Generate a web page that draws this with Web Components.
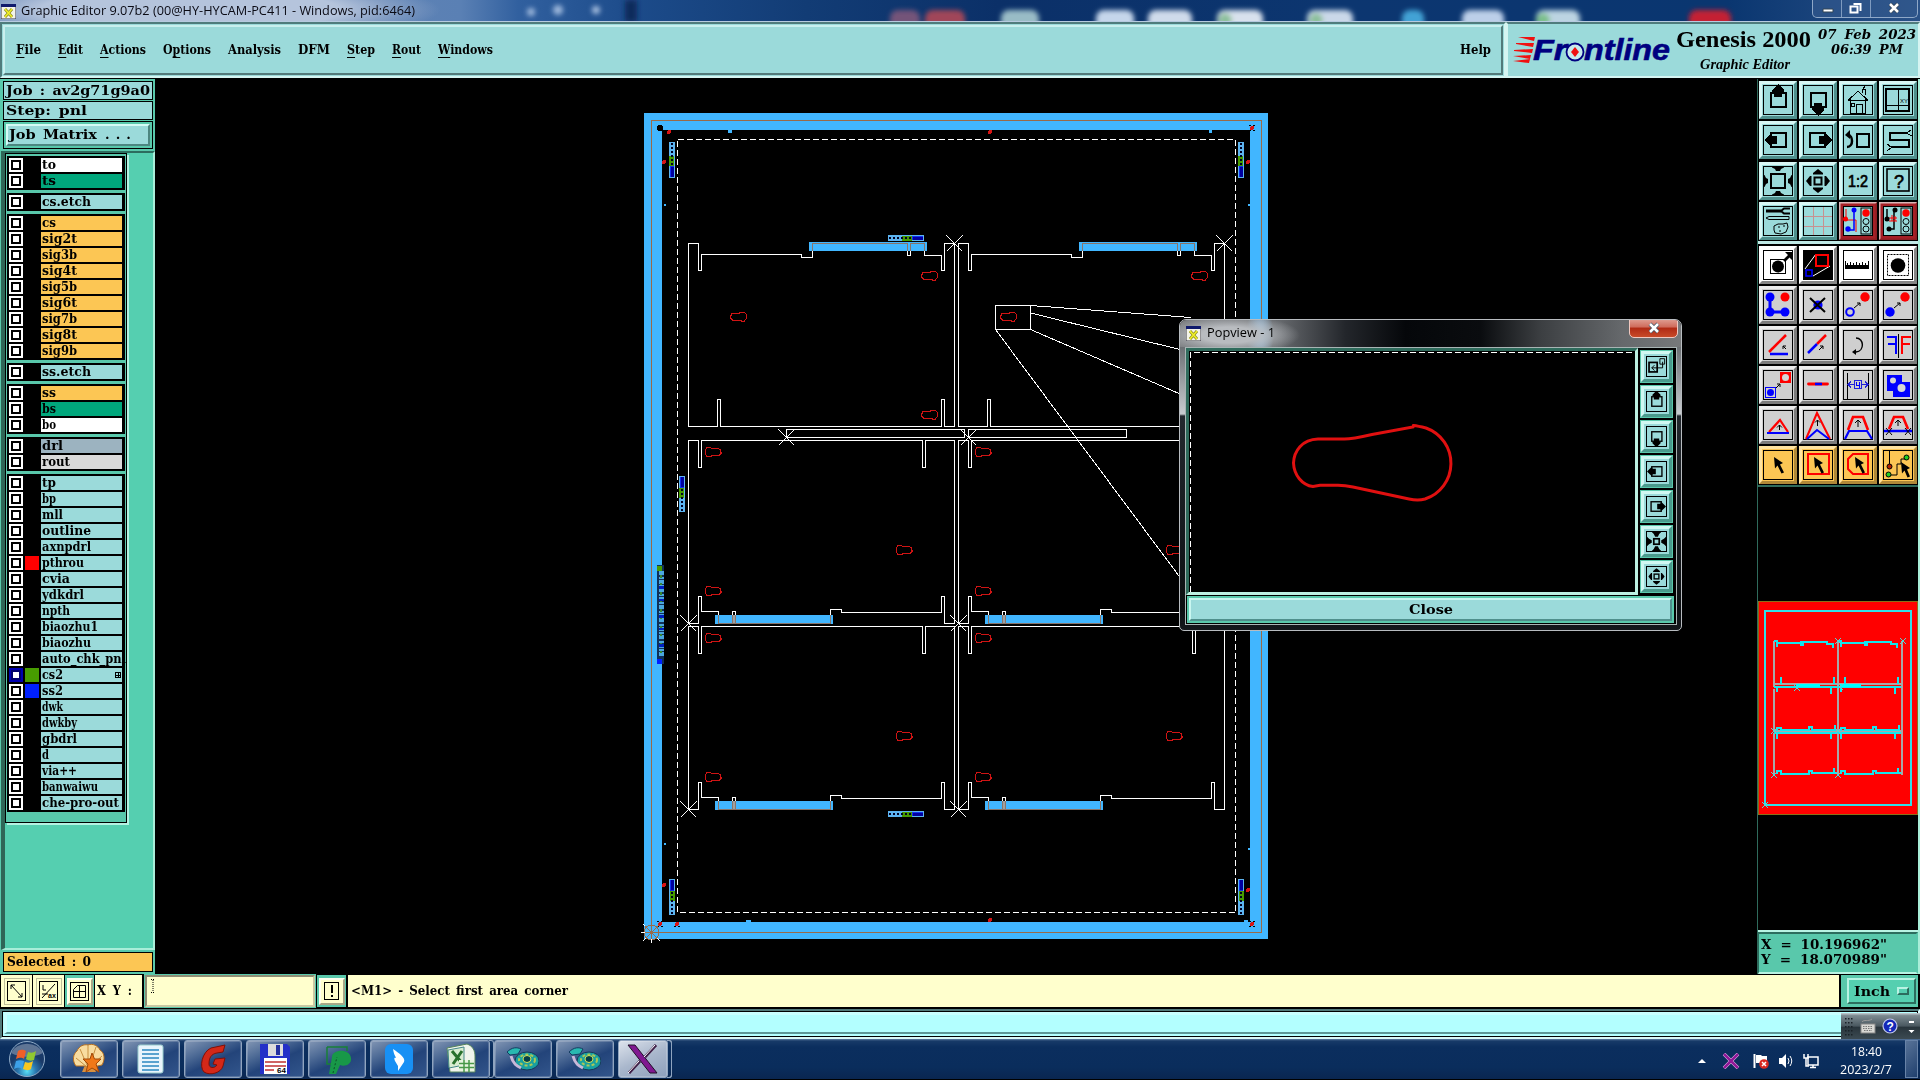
<!DOCTYPE html>
<html lang="en">
<head>
<meta charset="utf-8">
<title>Graphic Editor</title>
<style>
html,body{margin:0;padding:0;background:#000;overflow:hidden}
body{width:1920px;height:1080px}
</style>
</head>
<body>
<genesis-app></genesis-app>
<script>
const SLAB='"DejaVu Serif",serif', SERIF='"Liberation Serif",serif', SANS='"Open Sans","Noto Sans",sans-serif';
function define(name, html, init){
  customElements.define(name, class extends HTMLElement{
    constructor(){ super(); this.attachShadow({mode:'open'}); }
    connectedCallback(){
      if(this.ready) return; this.ready=true;
      this.shadowRoot.innerHTML = typeof html==='function' ? html(this) : html;
      if(init) init(this);
    }
  });
}

/* Text squeezed or stretched to a fixed advance width */
define('fit-text', `<style>:host{display:inline-block;white-space:pre;flex:none}
 span{display:inline-block;transform-origin:0 50%;white-space:pre}::slotted(u){text-decoration:underline;text-underline-offset:3px;text-decoration-thickness:1px;text-decoration-skip-ink:none}</style><span><slot></slot></span>`,
 el=>{ const s=el.shadowRoot.querySelector('span'), w=+el.getAttribute('w'), n=s.getBoundingClientRect().width;
   el.style.width=w+'px'; if(n) s.style.transform=`scaleX(${w/n})`; });

/* ---------- icons, drawn on a 38 x 38 grid ---------- */
const k='fill="none" stroke="#000"';
const up='<path d="M19 3l6 6v2h-2v5h-8v-5h-2V9z"/>';
const rot=(a,s)=>`<g transform="rotate(${a} 19 19)">${s}</g>`;
const inward='<path d="M13 4h12v1.500l-3 1.500-1 2h-4l-1-2-3-1.500z"/>';
const light=`<rect x="22" y="6" width="10" height="26" ${k}/><circle cx="27" cy="11" r="3.7" fill="#f00"/><circle cx="27" cy="19.5" r="3" ${k}/><circle cx="27" cy="27" r="3" ${k}/>`;
const ICONS={
 up:`<rect x="12" y="12" width="15" height="14" ${k} stroke-width="2"/>${up}`,
 down:rot(180,`<rect x="11" y="12" width="15" height="14" ${k} stroke-width="2"/>${up}`),
 left:rot(270,`<rect x="12" y="12" width="14" height="15" ${k} stroke-width="2"/><g transform="translate(0,2)">${up}</g>`),
 right:rot(90,`<rect x="12" y="12" width="14" height="15" ${k} stroke-width="2"/><g transform="translate(0,2)">${up}</g>`),
 home:`<path d="M9 19.5L19 10l10 9.500M11.500 18v14h15V18M9 19.500h20M23 12V8h3v6M17.500 32v-9h6v9M14 22h-2v3h3v-3zM24 8l2-3 2-1" ${k}/>`,
 views:`<rect x="7" y="8" width="23" height="22" ${k} stroke-width="1.600"/><path d="M19.500 8v22M7 24.500h23" ${k}/><text x="21" y="22" font-size="6" font-family="Liberation Sans">XY</text>`,
 prev:`<path d="M8 26c7 0 6-12 1-12" ${k} stroke-width="2.500"/><path d="M6 14l5-5v9z"/><rect x="18" y="13" width="12" height="13" ${k} stroke-width="2"/>`,
 snake:`<path d="M29 12H11V19h19v7H12" ${k} stroke-width="2"/><path d="M28 12l4-3M29 13l4 2M12 26l-4-3M12 27l-4 3" ${k}/>`,
 zin:`<rect x="12" y="12" width="14" height="14" ${k} stroke-width="2"/>${[0,90,180,270].map(a=>rot(a,inward)).join('')}`,
 pinch:`<rect x="15" y="15" width="8" height="8" ${k} stroke-width="2.500"/>${[0,90,180,270].map(a=>rot(a,'<path d="M12 5h14l-3 3-2 4h-4l-2-4z"/>')).join('')}`,
 zout:`<rect x="15.500" y="15.500" width="7" height="7" ${k} stroke-width="2"/>${[0,90,180,270].map(a=>rot(a,'<path d="M19 7l5 4v1.500h-10v-1.500z"/>')).join('')}`,
 one:`<text x="9" y="25" font-size="16" font-family="Liberation Sans" stroke="#000" stroke-width=".7" textLength="20" lengthAdjust="spacingAndGlyphs">1:2</text>`,
 help:`<rect x="8" y="7" width="22" height="22" ${k} stroke-width="1.600"/><text x="15" y="26" font-size="18" font-family="Liberation Sans" textLength="10" lengthAdjust="spacingAndGlyphs" stroke="#000" stroke-width=".6">?</text>`,
 tools:`<path d="M7 9h15" ${k} stroke-width="3"/><path d="M31 6.500h-6l-3 2.500 3 2.500h6" ${k} stroke-width="2"/><path d="M7 16l3-1.500h20v3H10z" ${k}/><path d="M15 24l4-2h5l4-1 1 4-2 5-5 2-6-1-1-3z" ${k}/><path d="M19 25h2M24 24h2M20 29h2" ${k}/>`,
 grid:`<path d="M14.500 5v28M24.500 5v28M5 14.500h28M5 24.500h28" fill="none" stroke="#c89090"/>`,
 netA:`<path d="M7 7v11M7 18h10v12" stroke="#f00" fill="none"/><path d="M15 8v20M15 10v18H9" stroke="#00f" fill="none" stroke-width="1.500"/><circle cx="15" cy="8" r="2.500" fill="#00f"/><circle cx="9" cy="27" r="2.700" fill="#00f"/><circle cx="6.500" cy="17" r="2.500" fill="#f00"/>${light}`,
 netB:`<path d="M8 7v11M15 8v19H10" ${k} stroke-width="1.500"/><path d="M10 16h8M10 19h8M13 13v6M16 14v5" stroke="#f00"/><circle cx="16" cy="8" r="2.500"/><circle cx="8" cy="17" r="2.500"/><circle cx="10" cy="27" r="2.500"/>${light}`,
 mv:`<rect x="11.500" y="13.500" width="15" height="14" fill="#fff" stroke="#000"/><circle cx="19" cy="20.500" r="6"/><path d="M24 14l5-5-3-3h7v8l-2.500-2.500L26 16z"/>`,
 resize:`<path d="M4 4h30v30H4z"/><path d="M6 23L17 8M14 30L31 20" stroke="#fff"/><rect x="17" y="9" width="12" height="11" fill="#000" stroke="#f00" stroke-width="2"/><rect x="7" y="24" width="6" height="6" fill="#000" stroke="#00f" stroke-width="1.600"/>`,
 ruler:`<path d="M6 23V15h1v4h1v-2h1v2h2v-3h1v3h2v-2h1v2h2v-3h1v3h2v-2h1v2h2v-3h1v3h2v-2h1v2h2v-4h1v8z"/>`,
 sel:`<rect x="8.500" y="8.500" width="21" height="21" ${k} stroke-dasharray="2 1"/><circle cx="19" cy="19.500" r="7.300"/>`,
 copy:`<path d="M11 11v15h16" fill="none" stroke="#00f" stroke-width="3"/><circle cx="11" cy="11" r="4.500" fill="#00f"/><circle cx="11" cy="26" r="4.500" fill="#00f"/><circle cx="26" cy="26" r="4.500" fill="#00f"/><circle cx="26" cy="11" r="4.500" fill="#f00"/>`,
 del:`<circle cx="19" cy="19" r="4.600" fill="#00f"/><path d="M11 12l15 14M26 12L11 26" stroke="#000" stroke-width="2"/>`,
 mv1:`<circle cx="11" cy="26" r="3.800" fill="none" stroke="#00f" stroke-width="2"/><circle cx="26" cy="11" r="4.700" fill="#f00"/><path d="M15 22l6-5M18 17h3v3" ${k}/>`,
 mv2:`<circle cx="11" cy="26" r="4.700" fill="#00f"/><circle cx="26" cy="11" r="4.700" fill="#f00"/><path d="M15 22l6-5M18 17h3v3" ${k}/>`,
 ang:`<path d="M27 9L10 26" stroke="#f00" stroke-width="2.500"/><path d="M11 28h18" stroke="#00f" stroke-width="2.500"/><path d="M27 23l-3-3M24 23v-3h3" ${k}/>`,
 lin:`<path d="M27 9L18 18" stroke="#f00" stroke-width="2.500"/><path d="M18 18L9 27" stroke="#00f" stroke-width="2.500"/><path d="M20 24l4-4M21 20h3v3" ${k}/>`,
 rotr:`<path d="M17 12c8 0 9 13 0 14h-2" ${k} stroke-width="1.400"/><path d="M13 26l4-3v6z"/>`,
 mir:`<path d="M8 11h9v17M9 18h8" fill="none" stroke="#00f" stroke-width="2"/><path d="M19.500 8v24" ${k}/><path d="M32 11h-9v17M23 18h8" fill="none" stroke="#f00" stroke-width="2"/>`,
 cpy:`<rect x="6.500" y="21.500" width="10" height="10" fill="none" stroke="#00f"/><circle cx="11.500" cy="26.500" r="3.500" fill="#00f"/><rect x="21" y="6" width="11" height="11" fill="#f00"/><circle cx="26.500" cy="11.500" r="3.500" fill="#d6d6d6"/><path d="M17 22l4-4M18 18h3v3" ${k}/>`,
 brk:`<path d="M9.500 18h19" stroke="#f00" stroke-width="2.800" stroke-linecap="round"/><path d="M16 18h7" stroke="#00f" stroke-width="2.500"/>`,
 gap:`<path d="M8.500 7v26M29.500 7v26" ${k}/><path d="M9 18.500h6M23 18.500h6M12 15.500l-3 3 3 3M26 15.500l3 3-3 3M15.500 14.500h7v8h-7z" fill="none" stroke="#2222d8"/><path d="M17.500 16v3h3M20.500 16v6" fill="none" stroke="#00f"/>`,
 union:`<path d="M8 9h15v7h8v15H14v-6H8z" fill="#00f"/><circle cx="14" cy="14.500" r="3" fill="#d6d6d6"/><circle cx="22.500" cy="22" r="4" fill="#d6d6d6"/>`,
 t1:`<path d="M10 26L21 14l8 12" fill="none" stroke="#f00" stroke-width="2.200"/><path d="M8 27h22" stroke="#00f" stroke-width="2"/><path d="M20.500 24v-5M18 21.500l2.500-2.500 2.500 2.500" ${k}/>`,
 t2:`<path d="M7 33L18 7l13 26" fill="none" stroke="#f00" stroke-width="2"/><path d="M8 33l10-9 12 9" fill="none" stroke="#00f" stroke-width="2"/><path d="M18.500 20v-6M16 16.500l2.500-2.500 2.500 2.500" ${k}/>`,
 t3:`<path d="M9 24l5-13h10l5 13" fill="none" stroke="#f00" stroke-width="2.600"/><path d="M6 33l4-8h18l5 8" fill="none" stroke="#00f" stroke-width="2.200"/><path d="M19 21v-7M16 17l3-3 3 3" ${k}/>`,
 t4:`<path d="M10 23l5-12h9l5 12" fill="none" stroke="#f00" stroke-width="2.600"/><path d="M5 25h28" stroke="#00f" stroke-width="2.500"/><path d="M7 22l6 7M13 22l-6 7M26 22l6 7M32 22l-6 7M19 20v-6M16 17l3-3 3 3" ${k}/>`,
 a1:`<path d="M15 11l9 6-3 1.500 4 8-2.500 1-4-8-2.500 3z"/>`,
 a2:`<rect x="9" y="8" width="21" height="20" fill="none" stroke="#f00" stroke-width="2"/><path d="M15 11l9 6-3 1.500 4 8-2.500 1-4-8-2.500 3z"/>`,
 a3:`<path d="M14 8h15v20H14l-5-5V13z" fill="none" stroke="#f00" stroke-width="2"/><path d="M16 11l9 6-3 1.500 4 8-2.500 1-4-8-2.500 3z"/>`,
 a4:`<path d="M10.500 5v14M10 29h8V18h4v-5h5" ${k}/><circle cx="10.500" cy="20.500" r="2.500" fill="#b02000" stroke="#000"/><circle cx="27.500" cy="11.500" r="2.500" fill="#2c2" stroke="#000"/><circle cx="9.500" cy="28.500" r="2.500" fill="#2c2" stroke="#000"/><path d="M22 16l9 6-3 1.500 3 7-2.500 1-3-7-2.500 3z"/>`,
 pop:`<rect x="8" y="13" width="12" height="14" ${k} stroke-width="2.500"/><path d="M24 7.500h7v8h-7zM28 12v9H12M16 17l-4 4 4 4" ${k} stroke-width="1.400"/>`
};
define('tool-btn', el=>{
  const mini=el.hasAttribute('mini'), t=el.getAttribute('tone')||'aqua';
  const c={aqua:['#9bdada','#d8f7f5','#4f8f8c'],white:['#fff','#fff','#868686'],gray:['#cfcfcf','#ededed','#7b7b7b'],gold:['#fcc654','#ffe3a0','#b08838'],alert:['#9bdada','#d9b8b8','#8c1d22']}[t];
  return mini ? `<style>:host{display:block;width:31px;height:31px;border:1px solid #59c8ab;background:#59c8ab}
   div{box-sizing:border-box;width:31px;height:31px;background:#9bdada;border:3px solid;border-color:#d0f8f2 #4a9a8c #4a9a8c #d0f8f2;display:grid;place-items:center}
   svg{display:block;border:1px solid #000}</style><div><svg width="19" height="19" viewBox="5 5 28 28">${ICONS[el.getAttribute('icon')]}</svg></div>`
  : `<style>:host{display:block;width:38px;height:38px}div{box-sizing:border-box;width:38px;height:38px;background:${c[0]};border:3px solid;border-color:${c[1]} ${c[2]} ${c[2]} ${c[1]}}
   svg{display:block;margin:-3px;shape-rendering:${/^(up|down|left|right|home|views|snake|grid|ruler|mir|gap)$/.test(el.getAttribute('icon'))?'crispEdges':'auto'}}</style>
   <div><svg width="38" height="38" viewBox="0 0 38 38">${t==='alert'?'<rect x="3" y="3" width="32" height="32" fill="none" stroke="#a52026" stroke-width="3"/>':''}<rect x="4.500" y="4.500" width="29" height="29" fill="none" stroke="${el.getAttribute('icon')==='resize'?'none':'#000'}" shape-rendering="crispEdges"/>${ICONS[el.getAttribute('icon')]}</svg></div>`;
});

/* ---------- title bar ---------- */
define('x-badge', `<style>:host{display:block;width:15px;height:15px;flex:none}</style><svg width="15" height="15" style="display:block"><rect width="15" height="15" fill="#f4f4e8" stroke="#334" /><rect width="15" height="3" fill="#101a6c"/><path d="M4 5l7 8M11 5l-7 8" stroke="#8a8a20" stroke-width="3"/><path d="M4 5l7 8M11 5l-7 8" stroke="#f0f028" stroke-width="1.600"/></svg>`);
define('title-bar', ()=>{
  const spots=[[905,30,'#80587a'],[945,40,'#b04858'],[1020,38,'#a9cbd0'],[1115,38,'#d9e8f8'],[1170,44,'#e4edf8'],[1240,46,'#eef4fb'],[1330,46,'#dfeaf6'],[1413,22,'#48aee0'],[1483,42,'#cfe0f6'],[1558,44,'#cfe6ee'],[1710,42,'#d81c2c']];
  return `<style>:host{display:flex;height:22px;align-items:center;background:
    radial-gradient(ellipse 250px 34px at 190px 10px,#b5c4dc 60%,#8ea5c8cc 80%,transparent 100%),
    linear-gradient(90deg,#6f8db8 0,#5a80b4 24%,#31609f 27%,#1c4b8a 33%,#123c75 42%,#0b3068 52%,#0c3670 70%,#0a3670 90%,#2a5288 100%);
    position:relative;overflow:hidden;border-bottom:1px solid #b8cbe0;box-sizing:border-box;font:12px ${SANS};color:#0a0a14}
   x-badge{margin:2px 5px 0 1px}svg.s{position:absolute;left:0;top:0}
   fit-text{position:relative}.gap{flex:1}.ctl{position:relative;align-self:flex-start;display:flex;height:17px;border:1px solid #8fa8c8;border-top:0;border-radius:0 0 5px 5px;margin-right:2px;background:#33588cb0}
   .ctl div{width:28px;display:grid;place-items:center;border-right:1px solid #7f9bc0}.ctl div:last-child{width:46px;border:0}</style>
   <svg class="s" width="1920" height="22"><defs><filter id="b" x="-50%" y="-50%" width="200%" height="200%"><feGaussianBlur stdDeviation="2.600"/></filter></defs><g filter="url(#b)">
    ${spots.map(([x,w,c])=>`<rect x="${x-w/2}" y="10" width="${w}" height="22" rx="8" fill="${c}" opacity=".9"/>`).join('')}<circle cx="1543" cy="20" r="7" fill="#7cc08c"/><circle cx="1316" cy="20" r="7" fill="#8cc09c"/><circle cx="1225" cy="20" r="7" fill="#8cc09c"/>
    <circle cx="531" cy="12" r="4" fill="#9db8dc"/><circle cx="558" cy="10" r="5" fill="#9db8dc"/><circle cx="596" cy="10" r="4" fill="#a8c0e0"/><path d="M625 0h12v22h-12z" fill="#0b2a5c"/></g></svg>
   <x-badge style="position:relative"></x-badge><fit-text w="394">Graphic Editor 9.07b2 (00@HY-HYCAM-PC411 - Windows, pid:6464)</fit-text><span class="gap"></span>
   <div class="ctl"><div><svg width="28" height="17"><path d="M10 9h10v3H10z" fill="#fff" stroke="#345"/></svg></div><div><svg width="28" height="17"><path d="M11.500 4h7v7M8.500 6.500h7v6h-7z" fill="none" stroke="#fff" stroke-width="2"/></svg></div><div><svg width="46" height="17"><path d="M19 4l8 8M27 4l-8 8" stroke="#345" stroke-width="4"/><path d="M19 4l8 8M27 4l-8 8" stroke="#fff" stroke-width="2.500"/></svg></div></div>`;
});

/* ---------- menu bar and logo ---------- */
define('menu-bar', `<style>:host{display:flex;flex:none;width:1506px;height:56px;box-sizing:border-box;background:#9bdada;border:2px solid;border-color:#4f7c7c #d5f5f2 #d5f5f2 #4f7c7c;padding:1px;font:bold 12.500px ${SLAB};color:#000}
 .in{flex:1;display:flex;align-items:center;border:2px solid;border-color:#c9efee #527a7a #527a7a #c9efee;padding:0 10px 2px 11px;gap:17px}.g{flex:1}</style>
 <div class="in"><fit-text w="25"><u>F</u>ile</fit-text><fit-text w="25"><u>E</u>dit</fit-text><fit-text w="46"><u>A</u>ctions</fit-text><fit-text w="48">O<u>p</u>tions</fit-text><fit-text w="53">Analysis</fit-text><fit-text w="32">DFM</fit-text><fit-text w="28"><u>S</u>tep</fit-text><fit-text w="29"><u>R</u>out</fit-text><fit-text w="55"><u>W</u>indows</fit-text><span class="g"></span><fit-text w="31">Help</fit-text></div>`);
define('brand-panel', `<style>:host{display:flex;flex:1;height:56px;box-sizing:border-box;background:#9bdada;border:2px solid;border-color:#4f7c7c #d5f5f2 #d5f5f2 #d5f5f2;color:#000}
 .mid{display:flex;flex-direction:column;width:136px;margin-left:4px}.mid fit-text:first-child{font:bold 24px/28px ${SERIF};margin-top:1px}.mid fit-text:last-child{font:italic bold 14px/16px ${SERIF};margin:4px 0 0 24px}
 .r{display:flex;flex-direction:column;font:italic bold 12.500px/15px ${SLAB};margin:3px 0 0 6px;word-spacing:3px}.r fit-text+fit-text{margin-left:13px}
 svg{display:block;margin:4px 0 0 5px;flex:none}</style>
 <svg width="161" height="46" viewBox="0 -8 161 46"><g fill="#f01010"><path d="M5 1l17 0 -1 4zM3 7l18 0-1 4-17-3zM1 14l19-1-1 4-18-2zM0 20l18-1-1 4zM0 25l17-2-1 4z"/></g>
 <text x="20" y="24" font-family="Liberation Sans" font-weight="700" font-style="italic" font-size="29" fill="#000080" stroke="#000080" stroke-width=".6" textLength="34" lengthAdjust="spacingAndGlyphs">Fr</text><circle cx="62" cy="16" r="8.500" fill="#c8ecec" stroke="#000080" stroke-width="1.800"/><path d="M62 11l4 5-4 5-4-5z" fill="#f01010"/>
 <text x="71" y="24" font-family="Liberation Sans" font-weight="700" font-style="italic" font-size="29" fill="#000080" stroke="#000080" stroke-width=".6" textLength="86" lengthAdjust="spacingAndGlyphs">ntline</text></svg>
 <div class="mid" style="margin-left:2px"><fit-text w="135">Genesis 2000</fit-text><fit-text w="90">Graphic Editor</fit-text></div>
 <div class="r"><fit-text w="98">07 Feb 2023</fit-text><fit-text w="72">06:39 PM</fit-text></div>`);

/* ---------- layer list ---------- */
define('layer-row', el=>{
  const c=el.getAttribute('bg')||'#9bdada', sw=el.getAttribute('sw')||'#000', on=el.hasAttribute('on');
  return `<style>:host{display:flex;height:14px;gap:2px;font:bold 12px/12px ${SLAB};color:#000}
  .c{width:14px;height:14px;box-sizing:border-box;background:${on?'#0000b0':'#fff'};padding:2px}.c i{display:block;box-sizing:border-box;width:10px;height:10px;background:#fff;border:${on?'2px solid #00006c':'2px solid #000'}}
  .s{width:14px;background:${sw}}.n{width:81px;background:${c};padding-left:1px;box-sizing:border-box;display:flex;align-items:center}.n fit-text{margin-top:-1px;position:relative}b{flex:1}</style>
  <div class="c"><i></i></div><div class="s"></div><div class="n"><fit-text w="${el.getAttribute('name').length*7}">${el.getAttribute('name')}</fit-text>${on?'<b></b><svg width="6" height="6" style="margin-right:1px" shape-rendering="crispEdges"><path d="M.5 .5h5v5h-5zM3 0v6M0 3h6" fill="none" stroke="#000"/></svg>':''}</div>`;
});
const G='#fcc654',N='#00a77c',W='#fff';
const GROUPS=[[['to',W],['ts',N]],[['cs.etch']],['cs','sig2t','sig3b','sig4t','sig5b','sig6t','sig7b','sig8t','sig9b'].map(n=>[n,G]),[['ss.etch']],[['ss',G],['bs',N],['bo',W]],[['drl','#9cb3c0'],['rout','#d9d9d9']],
 [['tp'],['bp'],['mll'],['outline'],['axnpdrl'],['pthrou',0,'#f00'],['cvia'],['ydkdrl'],['npth'],['biaozhu1'],['biaozhu'],['auto_chk_pnl'],['cs2',0,'#479c00',1],['ss2',0,'#0020ff'],['dwk'],['dwkby'],['gbdrl'],['d'],['via++'],['banwaiwu'],['che-pro-out']]];
define('layer-panel', `<style>:host{display:flex;flex-direction:column;width:155px;flex:none;box-sizing:border-box;background:#59c8ab;padding:2px 2px 2px 3px;font:bold 13px/16px ${SLAB};color:#000}
 .f{box-sizing:border-box;width:150px;border:1px solid #000;background:#9bdada;height:19px;display:flex;align-items:center;padding-left:2px;flex:none;word-spacing:2px}
 .f+.f{margin-top:1px}.jm{height:28px;margin:1px 0 2px;width:150px;box-sizing:border-box;border:1px solid #000;padding:2px;flex:none;word-spacing:2px}
 .jm div{height:22px;box-sizing:border-box;background:#9bdada;border:2px solid;border-color:#d5fbf5 #4c8680 #4c8680 #d5fbf5;display:flex;align-items:center;padding-left:1px}
 .d{letter-spacing:6px}
 .w{width:154px;box-sizing:border-box;margin-left:-2px;height:799px;border:2px solid;border-width:2px 2px 2px 4px;border-color:#2c6d5e #a9eed9 #a9eed9 #2f6657;background:#55cfb0;flex:none}
 .l{width:122px;box-sizing:border-box;height:670px;border:1px solid #000;background:#59c8ab;box-shadow:2px 2px 0 #b5f2e2;padding:2px 1px;display:flex;flex-direction:column;gap:3px}
 .g{background:#000;padding:2px;display:flex;flex-direction:column;gap:2px}
 .sel{margin-top:2px;height:20px;background:${G};font-size:12px;padding-left:3px}</style>
 <div class="f"><fit-text w="144">Job : av2g71g9a0</fit-text></div><div class="f"><fit-text w="81">Step: pnl</fit-text></div>
 <div class="jm"><div><fit-text w="88">Job Matrix</fit-text><fit-text w="32" class="d" style="margin-left:8px">...</fit-text></div></div>
 <div class="w"><div class="l">${GROUPS.map(g=>`<div class="g">${g.map(([n,b,s,o])=>`<layer-row name="${n}" ${b?`bg="${b}"`:''} ${s?`sw="${s}"`:''} ${o?'on':''}></layer-row>`).join('')}</div>`).join('')}</div></div>
 <div class="f sel"><fit-text w="84">Selected : 0</fit-text></div>`);

/* ---------- board drawing, in window coordinates ---------- */
function board(){
  const B='#41b6ff', br='#9a6a48';
  let o=`<path fill="${B}" fill-rule="evenodd" d="M644 113h624v826H644zM662 130v792h588V130z"/><rect x="651.500" y="120.500" width="610" height="812" fill="none" stroke="${br}"/>
  <rect x="677.500" y="139.500" width="558" height="773" fill="none" stroke="#fff" stroke-dasharray="6 3"/>`;
  const blob=(x,y,f)=>`<path transform="translate(${f?x:x-.5},${f?y:y+.5}) scale(${f?-1:1},1)" d="M-8 0l1-3 2-1h6l2-1h3l2 3v3l-2 3h-3l-3-1h-6l-2-2z" fill="none" stroke="#d01414"/>`;
  const top=x=>`<g transform="translate(${x},0)"><rect x="809" y="242" width="118" height="9" fill="${B}"/><path d="M812.500 251V243.500H907.500V251M910.500 251V243.500H924.500V251" fill="none" stroke="#8a7468"/>
   <path d="M688.500 426.500V243.500H698.500V270.500H701.500V254.500H801.500V257.500H812.500V251M907.500 251V255.500H910.500V251M924.500 251V255.500H941.500V270.500H944.500V243.500H954.500V426.500H944.500V399.500H941.500V426.500H720.500V399.500H717.500V426.500H688.500" fill="none" stroke="#fff"/></g>${blob(930+x,275.5,0)}${blob(739+x,316.5,0)}${blob(930+x,414.5,0)}`;
  const bot=(x,y)=>`<g transform="translate(${x},${y})"><rect x="715" y="615" width="118" height="9" fill="${B}"/><path d="M718.500 615V623.500H830.500V615M732.500 623V615M735.500 615V623" fill="none" stroke="#8a7468"/><rect x="733" y="615" width="2" height="8" fill="#a0a0a0"/>
   <path d="M718.500 615V611.500H701.500V596.500H698.500V623.500H688.500V440.500H698.500V467.500H701.500V440.500H922.500V467.500H925.500V440.500H954.500V623.500H944.500V596.500H941.500V612.500H841.500V609.500H830.500V615M732.500 615V611.500H735.500V615" fill="none" stroke="#fff"/></g>${blob(713+x,452.5+y,1)}${blob(904+x,550.5+y,1)}${blob(713+x,591.5+y,1)}`;
  [0,270].forEach(x=>{o+=top(x)+bot(x,0)+bot(x,186)});
  o+=`<path d="M786.500 429.500h178v8h-178zM968.500 429.500h158v8h-158zM995.500 305.500h35v24h-35z" fill="none" stroke="#fff"/><path d="M1030.500 305.500L1191 317.500M1030.500 313L1180 349.500M1030.500 329.500L1179 393.500M995.500 329.500L1179 576" stroke="#fff" fill="none"/>`;
  [[954.5,243.5],[1224.5,243.5],[786.5,437.5],[968.5,437.5],[688.5,623.5],[958.5,623.5],[688.5,809.5],[958.5,809.5]].forEach(([x,y])=>o+=`<path d="M${x-8} ${y-8}l16 16M${x+8} ${y-8}l-16 16" stroke="#fff"/>`);
  const code=(x,y,a)=>`<g transform="translate(${x},${y}) rotate(${a})"><rect width="36" height="6" fill="#5db4f0"/><rect x="14" y="1" width="10" height="5" fill="#479c00"/><rect x="24" y="1" width="11" height="4" fill="#1030f0"/><path d="M1 3h35" stroke="#002" stroke-width="2" stroke-dasharray="2 2"/><path d="M25 3h10" stroke="#0000a0" stroke-width="3"/></g>`;
  o+=code(675,142,90)+code(1244,142,90)+code(669,915,-90)+code(1238,915,-90)+`<g transform="translate(0,988) scale(1,-1)">${code(685,476,90)}</g>`+code(888,235,0)+code(888,811,0);
  o+=`<rect x="657" y="565" width="7" height="99" fill="#103058"/><path d="M661 571v45M661 618v40" stroke="#4aa8e0" stroke-width="5" stroke-dasharray="4 1.500 2 1"/><path d="M661 575v80" stroke="#3a8a30" stroke-width="2" stroke-dasharray="3 5 2 7"/><path d="M661 586v68" stroke="#0020c0" stroke-width="5" stroke-dasharray="3 10 2 14"/><rect x="657" y="566" width="5" height="5" fill="#479c00"/><rect x="657" y="659" width="5" height="5" fill="#0020ff"/>`;
  [[669,132],[990,132],[1252,128],[664,162],[1248,162],[664,885],[1248,890],[660,924],[677,924],[990,920],[1252,924]].forEach(([x,y])=>o+=`<circle cx="${x}" cy="${y}" r="2" fill="#d81414"/>`);
  [[1252,128],[660,924],[677,924],[1252,924]].forEach(([x,y])=>o+=`<path d="M${x-3} ${y-3}h2v1h-2zM${x+1} ${y-3}h2v1h-2zM${x-3} ${y+2}h2v1h-2zM${x+1} ${y+2}h2v1h-2z"/>`);
  o+='<circle cx="660" cy="128" r="3"/>';
  [[728,130,4,3],[1209,130,3,3],[664,204,2,2],[1248,204,2,2],[664,843,2,2],[1248,848,2,2],[746,920,5,3],[1244,920,4,2]].forEach(([x,y,w,h])=>o+=`<rect x="${x}" y="${y}" width="${w}" height="${h}" fill="${B}"/>`);
  o+=`<circle cx="651.500" cy="932.500" r="7.500" fill="none" stroke="${br}"/><path d="M642 932.500h19M651.500 923v20M644 925l15 15M659 925l-15 15" stroke="${br}"/><path d="M641 932.500h4M651.500 939v4M643 941l3-3M660 941l-3-3M643 924l2 2" stroke="#fff"/>`;
  return o;
}
define('board-view', `<style>:host{display:block;flex:1;background:#000;overflow:hidden}svg{display:block;shape-rendering:crispEdges}</style><svg width="1602" height="896" viewBox="155 79 1602 896">${board()}</svg>`);

/* ---------- right column ---------- */
define('mini-map', ()=>{
  let s='';
  [0,64].forEach(x=>{
    s+=`<g transform="translate(${x},0)"><path d="M1774 641v46M1774 689v41M1774 733v42M1838 641v134" stroke="#a8a8a8" stroke-width="2"/>
    <path d="M1774 684h64M1774 731h64" stroke="#a8a8a8" stroke-width="2"/>
    <path d="M1777 647v-4h26v2h-2v-3h26v2h6v4M1774 641h4M1781 684v-7M1834 684v-7M1777 692v-4M1831 694v-7M1777 727v4M1777 728h4v2h28v-3h3v3h23v-5M1777 739v-6M1831 739v-6M1777 770v4M1777 771h4v3h28v-3h3v2h22v-5M1834 773h4" fill="none" stroke="#14e6ee" stroke-width="2"/><path d="M1774 687h64M1774 733h64" stroke="#14e6ee" stroke-width="2"/></g>`;});
  s+='<path d="M1902 641v134" stroke="#a8a8a8" stroke-width="2"/><path d="M1796 685.500h24M1840 685.500h21" stroke="#0ff" stroke-width="3"/>';
  [[1838,641],[1903,641],[1797,688],[1840,687],[1774,731],[1838,731],[1774,775],[1838,775],[1765,805]].forEach(([x,y])=>s+=`<path d="M${x-3} ${y-3}l6 6M${x+3} ${y-3}l-6 6" stroke="#50d8d8"/>`);
  return `<style>:host{display:block;flex:1;background:#000;min-height:0;overflow:hidden}svg{display:block;shape-rendering:crispEdges}</style><svg width="160" height="430" viewBox="1758 487 160 430"><rect x="1758.500" y="601.500" width="159" height="213" fill="#f00" stroke="#8a7018"/><rect x="1765" y="611" width="146" height="194" fill="none" stroke="#30e0e8" stroke-width="2"/>${s}</svg>`;
});
const T1='up down home views left right prev snake zin zout one help tools grid netA netB'.split(' ');
const T2='mv resize ruler sel copy del mv1 mv2 ang lin rotr mir cpy brk gap union t1 t2 t3 t4 a1 a2 a3 a4'.split(' ');
define('side-tools', `<style>:host{display:flex;flex-direction:column;width:163px;flex:none;box-sizing:border-box;background:#000;border-left:1px solid #2f6b5c;border-right:2px solid #a9eed9;color:#000}
 .t{display:grid;grid-template-columns:repeat(4,38px);gap:2px;padding:2px 1px 1px;flex:none}.a{border-bottom:3px solid #bfe9e6;height:159px}
 .b{height:238px;padding:2px 1px 1px;border-bottom:2px solid #2f6b5c}
 .xy{height:42px;flex:none;box-sizing:border-box;background:#59c8ab;border:2px solid;border-color:#2c6d5e #59c8ab #b8f3e3 #2c6d5e;border-left-width:1px;font:bold 12.500px/15px ${SLAB};padding:3px 0 0 2px;display:flex;flex-direction:column;word-spacing:4px}
 .ln{height:2px;background:#b8f3e3;flex:none}</style>
 <div class="t a">${T1.map(i=>`<tool-btn icon="${i}" tone="${i.startsWith('net')?'alert':'aqua'}"></tool-btn>`).join('')}</div>
 <div class="t b">${T2.map((i,n)=>`<tool-btn icon="${i}" tone="${n<4?'white':n>19?'gold':'gray'}"></tool-btn>`).join('')}</div>
 <mini-map></mini-map><div class="ln"></div><div class="xy"><fit-text w="126">X = 10.196962"</fit-text><fit-text w="126">Y = 18.070989"</fit-text></div>`);

/* ---------- command line ---------- */
define('command-line', `<style>:host{display:flex;height:35px;box-sizing:border-box;background:#000;padding:1px 2px 2px 1px;font:bold 12px ${SLAB};color:#000}
 .k{background:#ffffcd;display:grid;place-items:center;width:31px;margin-right:1px;flex:none}.k.g{background:#59c8ab;width:29px}
 .q{box-sizing:border-box;width:26px;height:27px;background:#ffffcd;border:2px solid;border-color:#fffff0 #a8a888 #a8a888 #fffff0;display:grid;place-items:center}
 .k:not(.g) .q{border:1px solid #c0c09c}svg{display:block;border:1px solid #000}
 .lb{background:#ffffcd;width:47px;display:flex;align-items:center;padding-left:2px;box-sizing:border-box;word-spacing:3px}
 .in{box-sizing:border-box;width:170px;background:#ffffcd;border:2px solid;border-color:#8e8e74 #c9c9a4 #c9c9a4 #8e8e74;margin:0 1px 0 0;padding:2px 4px;outline:1px solid #59c8ab;outline-offset:0}
 .m{flex:1;background:#ffffcd;display:flex;align-items:center;padding-left:3px;margin-left:1px;word-spacing:2px}
 .u{width:77px;box-sizing:border-box;background:#59c8ab;margin-left:2px;padding:3px 2px 3px 6px;font-size:13px}.u div{height:100%;box-sizing:border-box;border:2px solid;border-color:#b8f3e3 #2c6d5e #2c6d5e #b8f3e3;background:#55cfb0;display:flex;align-items:center;padding:0 5px 0 5px;justify-content:space-between}
 .u i{width:12px;height:8px;box-sizing:border-box;border:2px solid;border-color:#b8f3e3 #2c6d5e #2c6d5e #b8f3e3}</style>
 <div class="k"><div class="q"><svg width="17" height="18"><path d="M3 3l11 12M3 7V3h4M10 15h4v-4" ${k}/></svg></div></div>
 <div class="k"><div class="q"><svg width="17" height="18"><path d="M2 16L15 2M3 3v5h3M2 12h6" ${k}/><text x="8" y="16" font-size="7" font-family="Liberation Sans" textLength="8">ax</text></svg></div></div>
 <div class="k g"><div class="q"><svg width="17" height="17"><path d="M2.500 6.500l4-4h8v12h-12zM8.500 2v13M2 8.500h13" ${k}/></svg></div></div>
 <div class="lb"><fit-text w="35">X Y :</fit-text></div><div style="width:3px"></div>
 <div class="in"><svg width="5" height="14" style="border:0"><path d="M0 .5h4M0 13.500h4M2 1v12" ${k} stroke-dasharray="1 1"/></svg></div>
 <div class="k g" style="margin-left:1px"><div class="q"><svg width="13" height="16"><path d="M6 2h2v8H6zM6 12h2v2H6z"/></svg></div></div>
 <div class="m"><fit-text w="217">&lt;M1&gt; - Select first area corner</fit-text></div>
 <div class="u"><div><fit-text w="36">Inch</fit-text><i></i></div></div>`);
define('status-strip', `<style>:host{display:flex;height:30px;box-sizing:border-box;border:2px solid;border-color:#527a7a #e0ffff #d8f8f8 #527a7a;background:#b3ffff}
 .i{flex:1;border:1px solid #000;display:flex;padding:0 0 0 1px}.i div{flex:1;border:3px solid;border-color:#c9ffff #5c9696 #5c9696 #c9ffff;border-width:3px 0 2px 3px;margin-bottom:2px}
 .lang{width:79px;height:26px;margin:1px -3px -3px 0;background:linear-gradient(#c8d0d4,#7c8a90 10%,#4a5860 50%,#29353c 55%,#3c4a52);flex:none;position:relative}
 svg{display:block}</style><div class="i"><div></div><span class="lang"><svg width="79" height="26"><g fill="#1a2228">${[5,9,13,17,21].map(y=>[4,7,10].map(x=>`<rect x="${x}" y="${y}" width="1.500" height="1.500"/>`).join('')).join('')}</g><rect x="20" y="11" width="14" height="9" fill="#d8d8d4" stroke="#888"/><path d="M22 13.500h10M22 15.500h10M23 17.500h8" stroke="#777" stroke-dasharray="1.500 1"/><path d="M21 9c2-3 6 0 10-3" stroke="#999" fill="none"/><circle cx="49" cy="13" r="7" fill="#1428b8" stroke="#c0c8e8" stroke-width="1.200"/><text x="45.500" y="17.500" font-family="Liberation Sans" font-weight="700" font-size="12" fill="#fff">?</text><path d="M68 8h5v2h-5zM67.500 17h6l-3 3z" fill="#fff"/></svg></span></div>`);

/* ---------- popup window ---------- */
define('pop-window', `<style>:host{position:absolute;left:1179px;top:319px;width:503px;height:312px;box-sizing:border-box;border:1px solid #b8bcc0;border-radius:7px 7px 5px 5px;background:linear-gradient(180deg,transparent 26px,#6a6e72 26px,#c8ccd0 94px,#23282e 96px,#0c0f12 290px,#14181c),#222;display:flex;flex-direction:column;color:#000;overflow:hidden}
 .t{height:27px;box-sizing:border-box;display:flex;align-items:center;background:radial-gradient(ellipse 70px 20px at 50px 15px,#b9bcc0 40%,transparent),radial-gradient(ellipse 14px 26px at 80px 14px,#a9d8ff,transparent),linear-gradient(90deg,#77797c 0,#65686c 20%,#23262b 33%,#05070a 45%,#0a0c0f 60%,#3c3f42 72%,#65686b 88%,#77797b);padding:0 3px 0 6px;flex:none;font:12.500px ${SANS}}
 .t fit-text{margin:-2px 0 0 6px}
 .x{margin-left:auto;align-self:flex-start;margin-top:-2px;width:47px;height:18px;border:1px solid #f0c8c0;border-radius:0 0 5px 5px;background:linear-gradient(#e0a094,#cf6a5a 45%,#b02a14 50%,#c84a28);display:grid;place-items:center}
 .b{margin:0 4px 5px 5px;flex:1;border:1px solid #a8b4b4;background:#000;display:flex;flex-direction:column;padding:0}
 .r{display:flex;height:248px;gap:2px}.v{border:3px solid;border-color:#2f6b5c #bdf0e2 #bdf0e2 #2f6b5c;width:446px;height:241px;flex:none}
 .c{display:flex;flex-direction:column;gap:2px;padding-top:2px}
 .cl{height:27px;margin:0 2px 0 1px;box-sizing:border-box;border:2px solid #59c8ab;}.cl div{height:23px;box-sizing:border-box;border:2px solid;border-color:#c9f6f0 #4f8f8c #4f8f8c #c9f6f0;background:#9bdada;display:grid;place-items:center;font:bold 12.500px/14px ${SLAB}}
 svg{display:block}</style>
 <div class="t"><x-badge></x-badge><fit-text w="68">Popview - 1</fit-text><div class="x"><svg width="14" height="12"><path d="M3 2l8 8M11 2l-8 8" stroke="#456" stroke-width="4"/><path d="M3 2l8 8M11 2l-8 8" stroke="#fff" stroke-width="2.500"/></svg></div></div>
 <div class="b"><div class="r"><div class="v"><svg width="446" height="241" viewBox="1189 351 446 241"><path d="M1190.500 592V352.500H1635" fill="none" stroke="#fff" stroke-dasharray="6 3" shape-rendering="crispEdges"/>
 <path d="M1347 439H1318C1302 439.500 1294 451 1293.500 463C1294 475 1302 485 1313 486.500L1320 485.200H1338Q1345 485.500 1353 487L1409 499Q1418 501 1425 499A37.500 37.500 0 0 0 1426 428Q1418 426 1413.500 425.500L1413 427L1372 434.500Q1350 439.500 1343 439" fill="none" stroke="#e01010" stroke-width="3"/></svg></div>
 <div class="c">${['pop','up','down','left','right','pinch','zout'].map(i=>`<tool-btn mini icon="${i}"></tool-btn>`).join('')}</div></div>
 <div class="cl"><div><fit-text w="44">Close</fit-text></div></div></div>`);

/* ---------- task bar ---------- */
const APPS=[
 `<path d="M12 22l-3 7h14l-3-7z" fill="#d89040"/><path d="M11 23L3 23C-1 18 0 11 4 8 6 3 11 1 15 2 20 0 25 3 27 7c5 3 5 10 2 15l-9 2z" fill="#f8dca0" stroke="#b87020"/><path d="M14 24L3 15M14 22L7 6M15 22L15 2M17 22L23 4M18 23L29 13" stroke="#c89040" fill="none"/><path d="M19 10l2.500 6 6.500 0-5 5 3 8-7-4-6 4 2-8-5-5h7z" fill="#f07818" stroke="#a04808"/>`,
 `<rect x="3" y="2" width="25" height="28" rx="2" fill="#e8f4fc" stroke="#9cc"/><path d="M7 7h17M7 11h17M7 15h17M7 19h17M7 23h17M7 27h17" stroke="#2a86c0" stroke-width="1.500"/>`,
 `<path d="M28 2L14 5C5 9 2 24 7 29c6 4 17 1 19-6l2-8-10 1-2 5 4 1c-3 4-8 3-8-1 0-6 2-10 8-11l6-1z" fill="#d42818" stroke="#801008"/>`,
 `<path d="M1 1h27l3 3v27H1z" fill="#2430c8"/><rect x="9" y="1" width="15" height="12" fill="#dcdcdc"/><rect x="17" y="2" width="4" height="10" fill="#2430a0"/><rect x="5" y="15" width="23" height="16" fill="#fff"/><path d="M6 19h21M6 23h21M6 27h9" stroke="#c03030" stroke-width="1.500"/><text x="18" y="30" font-size="8" font-weight="700" font-family="Liberation Sans">64</text>`,
 `<path d="M6 4h20v4M6 4v17h6" stroke="#188038" fill="none" stroke-width="1.500"/><path d="M11 14c0-8 18-9 19 1 1 7-7 9-11 7l-4 9H8z" fill="#189848"/><path d="M12 30l4-16" stroke="#0c5028" stroke-dasharray="2 2"/>`,
 `<rect x="2" y="1" width="28" height="30" rx="6" fill="#1890f4"/><path d="M10 6c1 6 2 6 3 9-2-1-2 0-1 3l3 5 0 5 6-9c2-4-5-9-11-13z" fill="#fff"/>`,
 `<path d="M2 5L22 1c6 2 8 7 8 12v16H5z" fill="#f0f4ec" stroke="#58885c"/><path d="M3 7l16-3v18L4 25z" fill="#d8ecd0" stroke="#488"/><path d="M7 8l10 12M17 8L8 21" stroke="#28702c" stroke-width="3"/><path d="M14 17h15v11H14z" fill="#e8f4e0"/><path d="M14 20.500h15M14 24.500h15M19 17v12M24 17v12" stroke="#489848" stroke-width="1.500"/>`,
 ...[0,1].map(()=>`<path d="M0 9c5-5 10-5 14-3l-3 5-8 1z" fill="#28b8b0" stroke="#143c60"/><ellipse cx="20" cy="18" rx="12" ry="9" fill="#18a0a0" stroke="#183858"/><ellipse cx="20" cy="17" rx="8" ry="5.500" fill="none" stroke="#a8c858" stroke-dasharray="3 2" stroke-width="2"/><ellipse cx="20" cy="16" rx="4" ry="3.500" fill="#064048" stroke="#d8e858"/><path d="M4 13c2 8 6 10 10 12" stroke="#c8b8d8" stroke-width="3" fill="none"/>`),
 `<path d="M1 2h7l22 28h-7z" fill="#801890" stroke="#201028"/><path d="M29 2L18 14M13 18L2 30" stroke="#402048" stroke-width="3"/><path d="M28 2L17 14M12 18L1 30" stroke="#fff" stroke-width="1"/>`];
define('task-app', `<style>:host{display:flex;width:58px;height:38px;box-sizing:border-box;border:1px solid #8fa4bf;border-radius:3px;background:linear-gradient(155deg,#8296b4 0,#4e6b96 30%,#23447a 55%,#33568c);box-shadow:inset 0 0 0 1px #ffffff30;justify-content:center;align-items:center;flex:none}
 :host([active]){width:50px;background:linear-gradient(155deg,#dde3ec,#a9b7cc 50%,#8ea0bc)}</style><slot></slot>`);
define('task-bar', `<style>:host{display:flex;height:40px;box-sizing:border-box;background:linear-gradient(#5f7ca0 0,#173a68 2px,#0b2e5e 8px,#0a2d5c 70%,#0a2650);padding:1px 2px 1px 0;font:13px/18px ${SANS};color:#fff}
 .apps{display:flex;gap:4px}.orb{width:60px;flex:none}.stk{width:4px;height:36px;margin:0 -4px 0 -5px;border:1px solid #8fa4bf;border-left:0;border-radius:0 3px 3px 0}.g{flex:1}
 .tray{display:flex;align-items:center;gap:9px;margin:3px 20px 0 0}.clk{display:flex;flex-direction:column;align-items:center;width:54px;margin-right:12px;padding-top:2px}
 .sd{width:11px;border:1px solid #6883a8;background:linear-gradient(135deg,#587398,#20406e)}svg{display:block}</style>
 <svg class="orb" width="60" height="38"><defs><radialGradient id="o" cx=".5" cy=".85"><stop offset="0" stop-color="#58e0f8"/><stop offset=".5" stop-color="#2a78b0"/><stop offset="1" stop-color="#1a3a68"/></radialGradient></defs><circle cx="27" cy="19" r="17.500" fill="url(#o)" stroke="#90acc8"/><path d="M11 13a17 14 0 0 1 32 0c-10 5-22 5-32 0z" fill="#fff" opacity=".3"/><path d="M18 11c3-2 6-1 8 0l-2 8c-3-2-5-1-8 0z" fill="#f06028"/><path d="M28 12c3 1 5 1 8-1l-2 9c-3 1-5 1-8-1z" fill="#90c830"/><path d="M16 21c3-1 5-1 8 0l-2 8c-3-2-5-1-8 0z" fill="#3ca0e8"/><path d="M25 22c3 1 5 1 8-1l-2 8c-3 2-5 1-8 0z" fill="#f8c820"/></svg>
 <div class="apps">${APPS.map((a,i)=>`<task-app ${i==9?'active':''}><svg width="32" height="32">${a}</svg></task-app>${i==6?'<span class="stk"></span>':i==9?'<span class="stk"></span><span class="stk"></span>':''}`).join('')}</div><span class="g"></span>
 <div class="tray"><svg width="8" height="6"><path d="M0 5l4-4 4 4z" fill="#fff"/></svg><svg width="18" height="16" style="margin:0 0 0 7px"><path d="M2 1l14 14M16 1L2 15" stroke="#e8c8f0" stroke-width="3.500"/><path d="M2 1l14 14M16 1L2 15" stroke="#901898" stroke-width="2.500"/></svg>
 <svg width="16" height="16" style="margin-left:4px"><path d="M1.500 1v14" stroke="#fff" stroke-width="2"/><path d="M3 2h5l1 1h5v7H3z" fill="#fff"/><circle cx="11" cy="11" r="4.800" fill="#d82820"/><path d="M9 9l4 4M13 9l-4 4" stroke="#fff" stroke-width="1.500"/></svg>
 <svg width="16" height="16"><path d="M1 5h3l4-4v14l-4-4H1z" fill="#fff"/><path d="M10 5q2 3 0 6M12 3q3.500 5 0 10" stroke="#fff" fill="none"/></svg>
 <svg width="16" height="16"><path d="M5 4h10v8H5zM7 14.500h6M10 12v3" fill="none" stroke="#fff" stroke-width="1.500"/><path d="M1 1v4h4V1M3 5v8h3" fill="none" stroke="#fff" stroke-width="1.500"/></svg></div>
 <div class="clk"><fit-text w="31">18:40</fit-text><fit-text w="52">2023/2/7</fit-text></div><span class="sd"></span>`);

define('genesis-app', `<style>:host{display:flex;flex-direction:column;width:1920px;height:1080px;background:#000;position:relative;overflow:hidden}
 .top{display:flex;height:56px;flex:none;width:1920px}.mid{display:flex;height:896px;flex:none;padding-top:1px;box-sizing:border-box}</style>
 <title-bar></title-bar><div class="top"><menu-bar></menu-bar><brand-panel></brand-panel></div>
 <div class="mid"><layer-panel></layer-panel><board-view></board-view><side-tools></side-tools></div>
 <command-line></command-line><status-strip></status-strip><task-bar></task-bar><pop-window></pop-window>`);
</script>
</body>
</html>
